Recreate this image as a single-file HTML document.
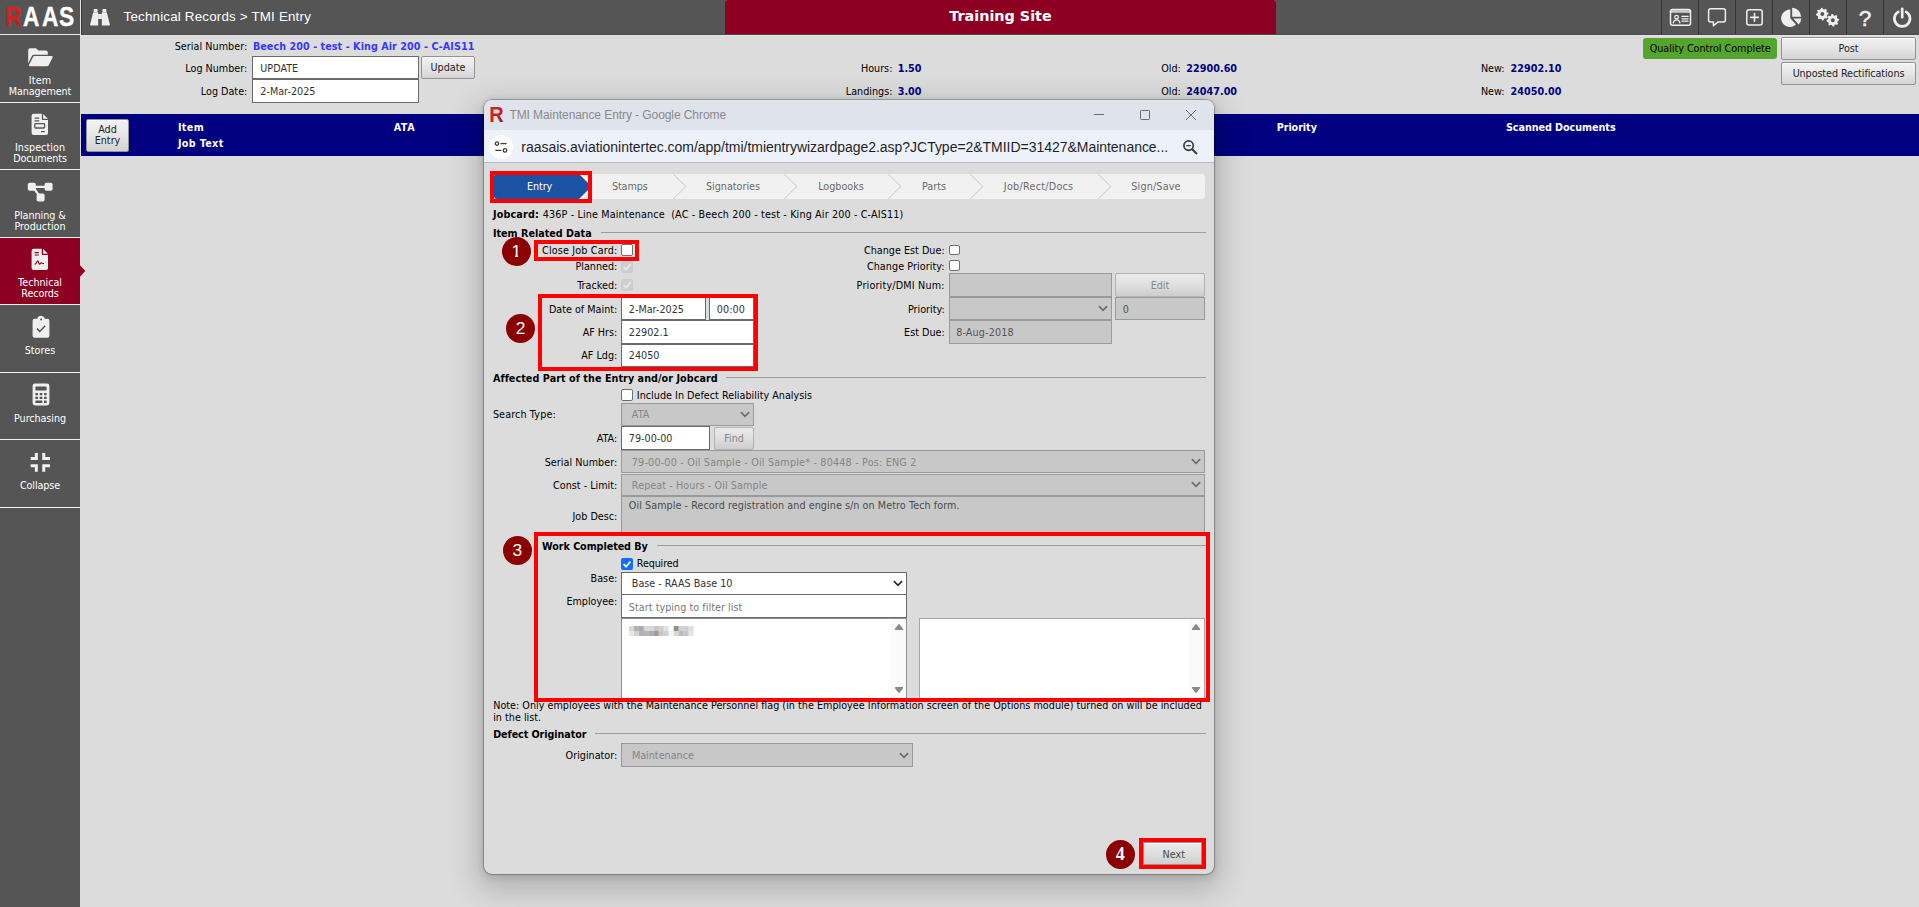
<!DOCTYPE html>
<html lang="en"><head><meta charset="utf-8"><title>TMI Entry</title>
<style>
html,body{margin:0;padding:0}
body{width:1919px;height:907px;overflow:hidden;position:relative;background:#dcdcdc;font-family:'DejaVu Sans','Liberation Sans',sans-serif;font-size:9.65px}
body div,body span.t,body svg{position:absolute;box-sizing:border-box}
span.t{white-space:pre;line-height:1.2}
.inp{background:#fff;border:1px solid #6a6a6a}
.dis{background:#c8c8c8;border:1px solid #9a9a9a}
.btn{background:linear-gradient(#f2f2f2,#e6e6e6 50%,#d3d3d3);border:1px solid #939393;border-radius:2px;box-shadow:inset 0 1px 0 #f9f9f9}
.btnd{background:linear-gradient(#ebebeb,#dfdfdf 50%,#cdcdcd);border:1px solid #b2b2b2;border-radius:2px}
.grp{left:0;top:0;width:0;height:0}
.red{border:4px solid #fe0000}
.circ{border-radius:50%;background:#8b0000}
.cb{background:#fff;border:1px solid #6f6f6f;border-radius:2px}
.cbd{background:#cecece;border:1px solid #cbcbcb;border-radius:2.5px}
.hr{background:#9c9c9c;height:1px}
</style></head>
<body>
<div class="grp" id="topbar">
<div style="left:0px;top:0px;width:1919px;height:35px;background:#555"></div>
<div style="left:81px;top:34px;width:1838px;height:1px;background:#4b4b4b"></div>
<div style="left:81px;top:0px;width:1px;height:35px;background:#3c3c3c"></div>
<div style="left:80px;top:0px;width:1px;height:35px;background:#e2e2e2"></div>
<div style="left:0px;top:34px;width:81px;height:1px;background:#e8e8e8"></div>
<div style="left:80px;top:35px;width:1839px;height:1px;background:#e3e3e3"></div>
<svg style="left:0px;top:0px;" width="80" height="34" viewBox="0 0 80 34"><defs><linearGradient id="rg" x1="0" y1="0" x2="1" y2="1"><stop offset="0" stop-color="#e02424"/><stop offset=".55" stop-color="#d42020"/><stop offset="1" stop-color="#a81414"/></linearGradient></defs><g font-family="'Liberation Sans',sans-serif" font-weight="bold" font-size="27.6" stroke-width=".35"><text x="5.4" y="25.9" fill="url(#rg)" stroke="#d42020" textLength="16" lengthAdjust="spacingAndGlyphs">R</text><text x="23.1" y="25.9" fill="#fff" stroke="#fff" textLength="16.400" lengthAdjust="spacingAndGlyphs">A</text><text x="41.9" y="25.9" fill="#fff" stroke="#fff" textLength="16.400" lengthAdjust="spacingAndGlyphs">A</text><text x="58.9" y="25.9" fill="#fff" stroke="#fff" textLength="15.200" lengthAdjust="spacingAndGlyphs">S</text></g></svg>
<svg style="left:90px;top:8px;" width="21" height="19" viewBox="0 0 21 19"><g fill="#efefef"><rect x="3.6" y="1" width="4" height="3" rx=".8"/><rect x="12.4" y="1" width="4" height="3" rx=".8"/><path d="M3.2 4.2h5v13.3h-7.4c-.5 0-.8-.4-.7-.9z"/><path d="M11.8 4.2h5l3.1 12.4c.1.5-.2.9-.7.9h-7.4z"/><rect x="8.2" y="6" width="3.6" height="5"/></g></svg>
<span class="t" style="left:123.60px;top:9.00px;font-family:'Liberation Sans',sans-serif;font-size:13.4px;color:#fff;letter-spacing:0.171px;">Technical Records &gt; TMI Entry</span>
<div style="left:725px;top:0px;width:551px;height:34px;background:#8e0021;border-radius:4px 4px 0 0"></div>
<span class="t" style="left:949.30px;top:8.00px;font-family:'DejaVu Sans','Liberation Sans',sans-serif;font-size:14.4px;color:#fff;font-weight:bold;letter-spacing:-0.020px;">Training Site</span>
<div style="left:1661px;top:0px;width:1px;height:34px;background:#333"></div>
<div style="left:1698px;top:0px;width:1px;height:34px;background:#333"></div>
<div style="left:1735px;top:0px;width:1px;height:34px;background:#333"></div>
<div style="left:1772px;top:0px;width:1px;height:34px;background:#333"></div>
<div style="left:1809px;top:0px;width:1px;height:34px;background:#333"></div>
<div style="left:1846px;top:0px;width:1px;height:34px;background:#333"></div>
<div style="left:1883px;top:0px;width:1px;height:34px;background:#333"></div>
<svg style="left:1669px;top:8px;" width="23" height="19" viewBox="0 0 23 19"><rect x="1.5" y="1.6" width="20" height="15.6" rx="2" fill="none" stroke="#efefef" stroke-linecap="round" stroke-linejoin="round" stroke-width="1.500"/><path d="M2.200 3.500h18.600" fill="none" stroke="#efefef" stroke-linecap="round" stroke-linejoin="round" stroke-width="2.600" stroke-opacity=".8"/><circle cx="7.6" cy="9.200" r="1.800" fill="none" stroke="#efefef" stroke-linecap="round" stroke-linejoin="round" stroke-width="1.300"/><path d="M4.3 14.8c.3-2.2 1.6-3 3.3-3s3 .8 3.300 3" fill="none" stroke="#efefef" stroke-linecap="round" stroke-linejoin="round" stroke-width="1.300"/><path d="M13 8.400h6M13 10.800h6M13 13.200h6" fill="none" stroke="#efefef" stroke-linecap="round" stroke-linejoin="round" stroke-width="1.300"/></svg>
<svg style="left:1706px;top:7px;" width="22" height="21" viewBox="0 0 22 21"><path d="M4.6 1.700h12.800a2 2 0 0 1 2 2v9.400a2 2 0 0 1-2 2h-5.600l-4.400 3.700v-3.700h-2.800a2 2 0 0 1-2-2v-9.400a2 2 0 0 1 2-2z" fill="none" stroke="#efefef" stroke-linecap="round" stroke-linejoin="round" stroke-width="1.500"/></svg>
<svg style="left:1745px;top:8px;" width="19" height="19" viewBox="0 0 19 19"><rect x="1.8" y="1.700" width="15.400" height="15.400" rx="2.300" fill="none" stroke="#efefef" stroke-linecap="round" stroke-linejoin="round" stroke-width="1.500"/><path d="M9.500 5.600v7.600M5.700 9.400h7.600" fill="none" stroke="#efefef" stroke-linecap="round" stroke-linejoin="round" stroke-width="1.6"/></svg>
<svg style="left:1781px;top:7px;" width="22" height="21" viewBox="0 0 22 21"><path d="M9.300 2.600v8.600l5.600 6.300a8.700 8.700 0 1 1-5.600-14.900z" fill="#efefef"/><path d="M11.200 .8a8.900 8.900 0 0 1 8.900 8.900h-8.900z" fill="#efefef"/><path d="M12.300 11.600h8a8.600 8.600 0 0 1-2.700 5.800z" fill="#efefef"/></svg>
<svg style="left:1815px;top:7px;" width="26" height="21" viewBox="0 0 26 21"><path fill-rule="evenodd" fill="#efefef" d="M6.07,0.92L7.30,0.80L8.26,2.28L9.18,2.56L10.80,1.86L11.75,2.65L11.39,4.37L11.84,5.22L13.48,5.87L13.60,7.10L12.12,8.06L11.84,8.98L12.54,10.60L11.75,11.55L10.03,11.19L9.18,11.64L8.53,13.28L7.30,13.40L6.34,11.92L5.42,11.64L3.80,12.34L2.85,11.55L3.21,9.83L2.76,8.98L1.12,8.33L1.00,7.10L2.48,6.14L2.76,5.22L2.06,3.60L2.85,2.65L4.57,3.01L5.42,2.56zM5.30,7.1a2.0,2.0 0 1,0 4.0,0a2.0,2.0 0 1,0 -4.0,0z"/><path fill-rule="evenodd" fill="#efefef" d="M16.57,7.12L17.80,7.00L18.76,8.48L19.68,8.76L21.30,8.06L22.25,8.85L21.89,10.57L22.34,11.42L23.98,12.07L24.10,13.30L22.62,14.26L22.34,15.18L23.04,16.80L22.25,17.75L20.53,17.39L19.68,17.84L19.03,19.48L17.80,19.60L16.84,18.12L15.92,17.84L14.30,18.54L13.35,17.75L13.71,16.03L13.26,15.18L11.62,14.53L11.50,13.30L12.98,12.34L13.26,11.42L12.56,9.80L13.35,8.85L15.07,9.21L15.92,8.76zM15.80,13.3a2.0,2.0 0 1,0 4.0,0a2.0,2.0 0 1,0 -4.0,0z"/></svg>
<span class="t" style="left:1858.71px;top:5.00px;font-family:'Liberation Sans',sans-serif;font-size:22.6px;color:#efefef;-webkit-text-stroke:.5px #efefef;">?</span>
<svg style="left:1892px;top:7px;" width="21" height="21" viewBox="0 0 21 21"><path d="M6.300 4.900a7.800 7.800 0 1 0 7.800 0" fill="none" stroke="#efefef" stroke-linecap="round" stroke-linejoin="round" stroke-width="2.700"/><path d="M10.200 1.800v8.400" fill="none" stroke="#efefef" stroke-linecap="round" stroke-linejoin="round" stroke-width="2.700"/></svg>
</div>
<div class="grp" id="sidebar">
<div style="left:0px;top:35px;width:80px;height:872px;background:#555"></div>
<div style="left:0px;top:102px;width:80px;height:1px;background:#f0f0f0"></div>
<div style="left:0px;top:169px;width:80px;height:1px;background:#f0f0f0"></div>
<div style="left:0px;top:237px;width:80px;height:1px;background:#f0f0f0"></div>
<div style="left:0px;top:304px;width:80px;height:1px;background:#f0f0f0"></div>
<div style="left:0px;top:372px;width:80px;height:1px;background:#f0f0f0"></div>
<div style="left:0px;top:439px;width:80px;height:1px;background:#f0f0f0"></div>
<div style="left:0px;top:507px;width:80px;height:1px;background:#f0f0f0"></div>
<div style="left:0px;top:238px;width:80px;height:66px;background:#8e0021"></div>
<svg style="left:80px;top:264px;" width="6" height="14" viewBox="0 0 6 14"><path d="M0 1.300L5.300 7 0 12.700z" fill="#8e0021"/></svg>
<span class="t" style="left:28.80px;top:75.00px;font-family:'DejaVu Sans','Liberation Sans',sans-serif;font-size:9.65px;color:#fff;letter-spacing:0.120px;">Item</span>
<span class="t" style="left:8.75px;top:86.00px;font-family:'DejaVu Sans','Liberation Sans',sans-serif;font-size:9.65px;color:#fff;letter-spacing:-0.091px;">Management</span>
<span class="t" style="left:14.90px;top:142.00px;font-family:'DejaVu Sans','Liberation Sans',sans-serif;font-size:9.65px;color:#fff;letter-spacing:0.048px;">Inspection</span>
<span class="t" style="left:13.20px;top:153.00px;font-family:'DejaVu Sans','Liberation Sans',sans-serif;font-size:9.65px;color:#fff;letter-spacing:-0.143px;">Documents</span>
<span class="t" style="left:14.15px;top:210.00px;font-family:'DejaVu Sans','Liberation Sans',sans-serif;font-size:9.65px;color:#fff;letter-spacing:-0.033px;">Planning &amp;</span>
<span class="t" style="left:14.50px;top:221.00px;font-family:'DejaVu Sans','Liberation Sans',sans-serif;font-size:9.65px;color:#fff;letter-spacing:-0.022px;">Production</span>
<span class="t" style="left:18.10px;top:277.00px;font-family:'DejaVu Sans','Liberation Sans',sans-serif;font-size:9.65px;color:#fff;letter-spacing:-0.045px;">Technical</span>
<span class="t" style="left:21.30px;top:288.00px;font-family:'DejaVu Sans','Liberation Sans',sans-serif;font-size:9.65px;color:#fff;letter-spacing:-0.126px;">Records</span>
<span class="t" style="left:24.70px;top:345.00px;font-family:'DejaVu Sans','Liberation Sans',sans-serif;font-size:9.65px;color:#fff;letter-spacing:0.022px;">Stores</span>
<span class="t" style="left:14.05px;top:413.00px;font-family:'DejaVu Sans','Liberation Sans',sans-serif;font-size:9.65px;color:#fff;letter-spacing:-0.077px;">Purchasing</span>
<span class="t" style="left:19.95px;top:480.00px;font-family:'DejaVu Sans','Liberation Sans',sans-serif;font-size:9.65px;color:#fff;letter-spacing:-0.101px;">Collapse</span>
<svg style="left:27px;top:47px;" width="27" height="21" viewBox="0 0 27 21"><path fill="#efefef" d="M1.200 3.300a2 2 0 0 1 2-2h5.800l2.400 2.300h7.400a2 2 0 0 1 2 2v2.100h-13.600a2.600 2.600 0 0 0-2.300 1.400l-3.700 7.300z"/><path fill="#efefef" d="M7.400 8.900h17.200c.9 0 1.400.9 1 1.600l-3.900 7.700a2 2 0 0 1-1.800 1.100h-17.200c-.6 0-1-.6-.7-1.200l3.900-7.900a1.800 1.800 0 0 1 1.500-1.300z"/></svg>
<svg style="left:31.0px;top:112.6px;" width="18" height="23" viewBox="0 0 18 23"><path fill="#efefef" d="M2.600 .7h8.200v5.200a1.200 1.200 0 0 0 1.200 1.200h5v13a2 2 0 0 1-2 2h-12.400a2 2 0 0 1-2-2v-17.400a2 2 0 0 1 2-2z"/><path fill="#efefef" d="M12.100 .9l4.800 4.900h-4.800z"/><path d="M3.600 5.200h4.600M3.600 7.800h4.600M10 18.600h3.800" stroke="#555" fill="none" stroke-width="1.300"/><rect x="3.800" y="10.700" width="9.800" height="4.300" rx=".8" stroke="#555" fill="none" stroke-width="1.300"/></svg>
<svg style="left:27px;top:182px;" width="27" height="21" viewBox="0 0 27 21"><rect fill="#efefef" x=".8" y=".8" width="8" height="8" rx="1.800"/><rect fill="#efefef" x="17.600" y=".8" width="8" height="8" rx="1.800"/><rect fill="#efefef" x="9.600" y="11.600" width="8" height="8" rx="1.800"/><path d="M8 4.800h10M6 5l7.600 10.600" stroke="#efefef" stroke-width="2.200" fill="none"/></svg>
<svg style="left:31.0px;top:247.6px;" width="18" height="23" viewBox="0 0 18 23"><path fill="#efefef" d="M2.600 .7h8.200v5.200a1.200 1.200 0 0 0 1.200 1.200h5v13a2 2 0 0 1-2 2h-12.400a2 2 0 0 1-2-2v-17.400a2 2 0 0 1 2-2z"/><path fill="#efefef" d="M12.100 .9l4.800 4.900h-4.800z"/><path d="M3.600 4.600h4.200M3.600 7h4.200" stroke="#8e0021" fill="none" stroke-width="1.200"/><path d="M3.600 16.400c1.800-.2 2.400-3.600 3.200-3.600s.9 3.400 1.700 3.400.9-1.400 1.500-1.400 1 .9 3 .9" stroke="#8e0021" fill="none" stroke-width="1.200"/></svg>
<svg style="left:31.5px;top:315px;" width="18" height="24" viewBox="0 0 18 24"><path fill="#efefef" d="M2.600 3.800h2.600c.5-1.800 2-3 3.800-3s3.300 1.200 3.800 3h2.600a2 2 0 0 1 2 2v15a2 2 0 0 1-2 2h-12.800a2 2 0 0 1-2-2v-15a2 2 0 0 1 2-2z"/><circle cx="9" cy="4.400" r="1" fill="#555"/><path d="M5 13.600l2.800 2.800 5.400-5.600" stroke="#555" stroke-width="1.500" fill="none"/></svg>
<svg style="left:31.5px;top:383px;" width="18" height="23" viewBox="0 0 18 23"><rect fill="#efefef" x=".6" y=".6" width="16.800" height="21.800" rx="2.400"/><rect x="3.400" y="3.600" width="11.200" height="3.800" rx=".6" fill="#555"/><rect x="3.4" y="10.0" width="2.600" height="2.300" rx=".5" fill="#555"/><rect x="7.7" y="10.0" width="2.600" height="2.300" rx=".5" fill="#555"/><rect x="12.0" y="10.0" width="2.600" height="2.300" rx=".5" fill="#555"/><rect x="3.4" y="13.8" width="2.600" height="2.300" rx=".5" fill="#555"/><rect x="7.7" y="13.8" width="2.600" height="2.300" rx=".5" fill="#555"/><rect x="12.0" y="13.8" width="2.600" height="2.300" rx=".5" fill="#555"/><rect x="12.0" y="17.6" width="2.600" height="2.300" rx=".5" fill="#555"/><rect x="3.400" y="17.600" width="6.900" height="2.300" rx=".5" fill="#555"/></svg>
<svg style="left:30px;top:452px;" width="21" height="21" viewBox="0 0 21 21"><path d="M6.350 .9V6.450H.7M13.750 .9V6.450H20M6.350 19.800V13.650H.7M13.750 19.800V13.650H20" stroke="#efefef" stroke-width="3" fill="none"/></svg>
</div>
<div class="grp" id="main">
<span class="t" style="left:174.70px;top:41.00px;font-family:'DejaVu Sans','Liberation Sans',sans-serif;font-size:9.65px;color:#000;letter-spacing:0.040px;">Serial Number:</span>
<span class="t" style="left:252.90px;top:41.00px;font-family:'DejaVu Sans','Liberation Sans',sans-serif;font-size:9.65px;color:#3737ff;font-weight:bold;letter-spacing:0.052px;">Beech 200 - test - King Air 200 - C-AIS11</span>
<span class="t" style="left:185.30px;top:63.00px;font-family:'DejaVu Sans','Liberation Sans',sans-serif;font-size:9.65px;color:#000;">Log Number:</span>
<span class="t" style="left:200.80px;top:86.00px;font-family:'DejaVu Sans','Liberation Sans',sans-serif;font-size:9.65px;color:#000;">Log Date:</span>
<div class="inp" style="left:252px;top:56px;width:167px;height:23px"></div>
<div class="inp" style="left:252px;top:79px;width:167px;height:24px"></div>
<span class="t" style="left:260.30px;top:63.00px;font-family:'DejaVu Sans','Liberation Sans',sans-serif;font-size:9.65px;color:#333;">UPDATE</span>
<span class="t" style="left:260.30px;top:86.00px;font-family:'DejaVu Sans','Liberation Sans',sans-serif;font-size:9.65px;color:#333;">2-Mar-2025</span>
<div class="btn" style="left:421px;top:56px;width:54px;height:23px"></div>
<span class="t" style="left:430.57px;top:62.00px;font-family:'DejaVu Sans','Liberation Sans',sans-serif;font-size:9.65px;color:#222;">Update</span>
<span class="t" style="left:860.95px;top:63.00px;font-family:'DejaVu Sans','Liberation Sans',sans-serif;font-size:9.65px;color:#000;">Hours:</span>
<span class="t" style="left:897.80px;top:63.00px;font-family:'DejaVu Sans','Liberation Sans',sans-serif;font-size:9.65px;color:#000080;font-weight:bold;letter-spacing:-0.062px;">1.50</span>
<span class="t" style="left:845.80px;top:86.00px;font-family:'DejaVu Sans','Liberation Sans',sans-serif;font-size:9.65px;color:#000;letter-spacing:-0.003px;">Landings:</span>
<span class="t" style="left:897.80px;top:86.00px;font-family:'DejaVu Sans','Liberation Sans',sans-serif;font-size:9.65px;color:#000080;font-weight:bold;letter-spacing:-0.062px;">3.00</span>
<span class="t" style="left:1161.19px;top:63.00px;font-family:'DejaVu Sans','Liberation Sans',sans-serif;font-size:9.65px;color:#000;">Old:</span>
<span class="t" style="left:1186.30px;top:63.00px;font-family:'DejaVu Sans','Liberation Sans',sans-serif;font-size:9.65px;color:#000080;font-weight:bold;letter-spacing:0.032px;">22900.60</span>
<span class="t" style="left:1161.19px;top:86.00px;font-family:'DejaVu Sans','Liberation Sans',sans-serif;font-size:9.65px;color:#000;">Old:</span>
<span class="t" style="left:1186.30px;top:86.00px;font-family:'DejaVu Sans','Liberation Sans',sans-serif;font-size:9.65px;color:#000080;font-weight:bold;letter-spacing:0.032px;">24047.00</span>
<span class="t" style="left:1480.88px;top:63.00px;font-family:'DejaVu Sans','Liberation Sans',sans-serif;font-size:9.65px;color:#000;">New:</span>
<span class="t" style="left:1510.60px;top:63.00px;font-family:'DejaVu Sans','Liberation Sans',sans-serif;font-size:9.65px;color:#000080;font-weight:bold;letter-spacing:0.032px;">22902.10</span>
<span class="t" style="left:1480.88px;top:86.00px;font-family:'DejaVu Sans','Liberation Sans',sans-serif;font-size:9.65px;color:#000;">New:</span>
<span class="t" style="left:1510.60px;top:86.00px;font-family:'DejaVu Sans','Liberation Sans',sans-serif;font-size:9.65px;color:#000080;font-weight:bold;letter-spacing:0.032px;">24050.00</span>
<div style="left:1643px;top:38px;width:134px;height:21px;background:#55a42b;border-radius:3px"></div>
<span class="t" style="left:1649.70px;top:43.00px;font-family:'DejaVu Sans','Liberation Sans',sans-serif;font-size:9.65px;color:#000;letter-spacing:-0.029px;">Quality Control Complete</span>
<div class="btn" style="left:1781px;top:37px;width:135px;height:23px"></div>
<span class="t" style="left:1838.43px;top:43.00px;font-family:'DejaVu Sans','Liberation Sans',sans-serif;font-size:9.65px;color:#222;">Post</span>
<div class="btn" style="left:1781px;top:62px;width:135px;height:23px"></div>
<span class="t" style="left:1792.65px;top:68.00px;font-family:'DejaVu Sans','Liberation Sans',sans-serif;font-size:9.65px;color:#222;letter-spacing:-0.085px;">Unposted Rectifications</span>
<div style="left:81px;top:114px;width:1838px;height:42px;background:#000080"></div>
<div class="btn" style="left:86px;top:119px;width:43px;height:33px"></div>
<span class="t" style="left:98.18px;top:124.00px;font-family:'DejaVu Sans','Liberation Sans',sans-serif;font-size:9.65px;color:#222;">Add</span>
<span class="t" style="left:94.70px;top:135.00px;font-family:'DejaVu Sans','Liberation Sans',sans-serif;font-size:9.65px;color:#222;">Entry</span>
<span class="t" style="left:177.90px;top:122.00px;font-family:'DejaVu Sans','Liberation Sans',sans-serif;font-size:9.65px;color:#fff;font-weight:bold;letter-spacing:0.388px;">Item</span>
<span class="t" style="left:177.90px;top:138.00px;font-family:'DejaVu Sans','Liberation Sans',sans-serif;font-size:9.65px;color:#fff;font-weight:bold;letter-spacing:0.330px;">Job Text</span>
<span class="t" style="left:393.70px;top:122.00px;font-family:'DejaVu Sans','Liberation Sans',sans-serif;font-size:9.65px;color:#fff;font-weight:bold;letter-spacing:0.477px;">ATA</span>
<span class="t" style="left:1276.70px;top:122.00px;font-family:'DejaVu Sans','Liberation Sans',sans-serif;font-size:9.65px;color:#fff;font-weight:bold;letter-spacing:-0.055px;">Priority</span>
<span class="t" style="left:1505.90px;top:122.00px;font-family:'DejaVu Sans','Liberation Sans',sans-serif;font-size:9.65px;color:#fff;font-weight:bold;letter-spacing:-0.048px;">Scanned Documents</span>
</div>
<div class="grp" id="popup">
<div style="left:483.6px;top:99.6px;width:730.8px;height:774.8px;border-radius:8px;background:#dcdcdc;box-shadow:0 0 0 .8px rgba(0,0,0,.2),0 0 1.5px rgba(0,0,0,.5),0 10px 30px 7px rgba(0,0,0,.19),0 2px 8px rgba(0,0,0,.15)"></div>
<div style="left:484px;top:100px;width:730px;height:30px;background:#dfe3eb;border-radius:7.500px 7.500px 0 0"></div>
<div style="left:484px;top:130px;width:730px;height:32px;background:#edf1fa"></div>
<div style="left:484px;top:162px;width:730px;height:1px;background:#b9bcc2"></div>
<svg style="left:488px;top:104px;" width="17" height="20" viewBox="0 0 17 20"><defs><linearGradient id="rg2" x1="0" y1="0" x2="1" y2="1"><stop offset="0" stop-color="#e02424"/><stop offset=".55" stop-color="#cc1f1f"/><stop offset="1" stop-color="#9a1414"/></linearGradient></defs><text x="1.200" y="18" font-family="'Liberation Sans',sans-serif" font-weight="bold" font-size="22.200" fill="url(#rg2)" textLength="14.400" lengthAdjust="spacingAndGlyphs">R</text></svg>
<span class="t" style="left:509.40px;top:108.00px;font-family:'Liberation Sans',sans-serif;font-size:12px;color:#8a8a8a;letter-spacing:-0.076px;">TMI Maintenance Entry - Google Chrome</span>
<svg style="left:1093px;top:109px;" width="12" height="12" viewBox="0 0 12 12"><path d="M.7 5.500h10.400" stroke="#6e6e6e" stroke-width="1" fill="none"/></svg>
<svg style="left:1139px;top:109px;" width="12" height="12" viewBox="0 0 12 12"><rect x="1.500" y="1.500" width="9" height="9" rx=".8" stroke="#6e6e6e" stroke-width="1" fill="none"/></svg>
<svg style="left:1185px;top:109px;" width="12" height="12" viewBox="0 0 12 12"><path d="M1 1l10 10M11 1l-10 10" stroke="#6e6e6e" stroke-width="1" fill="none"/></svg>
<div style="left:489px;top:135px;width:24px;height:24px;background:#fff;border-radius:50%"></div>
<svg style="left:493px;top:139px;" width="16" height="16" viewBox="0 0 16 16"><g stroke="#3c3c3c" stroke-width="1.300" fill="none"><circle cx="4" cy="4.600" r="1.700"/><path d="M7.600 4.600h6"/><circle cx="12" cy="11.400" r="1.700"/><path d="M2.400 11.400h6"/></g></svg>
<span class="t" style="left:521.30px;top:139.00px;font-family:'Liberation Sans',sans-serif;font-size:14px;color:#1f1f1f;letter-spacing:-0.030px;">raasais.aviationintertec.com/app/tmi/tmientrywizardpage2.asp?JCType=2&amp;TMIID=31427&amp;Maintenance...</span>
<svg style="left:1182px;top:139px;" width="17" height="17" viewBox="0 0 17 17"><g stroke="#3c3c3c" fill="none"><circle cx="6.600" cy="6.600" r="4.700" stroke-width="1.700"/><path d="M10.200 10.200l4.800 4.800" stroke-width="2"/><path d="M4.400 6.600h4.400" stroke-width="1.300"/></g></svg>
<div style="left:494px;top:174px;width:711px;height:25px;background:#f1f1f1;border-radius:3px 4px 4px 3px"></div>
<svg style="left:494px;top:174px;" width="100" height="25" viewBox="0 0 100 25"><path d="M3 0h82l12.500 12.500-12.500 12.500h-82a3 3 0 0 1-3-3v-19a3 3 0 0 1 3-3z" fill="#1c52a3"/></svg>
<svg style="left:671.5px;top:174px;" width="16" height="25" viewBox="0 0 16 25"><path d="M1.300 0l12.500 12.500-12.500 12.500" stroke="#c6c6c6" stroke-width="1" fill="none"/></svg>
<svg style="left:783.0px;top:174px;" width="16" height="25" viewBox="0 0 16 25"><path d="M1.300 0l12.500 12.500-12.500 12.500" stroke="#c6c6c6" stroke-width="1" fill="none"/></svg>
<svg style="left:887.2px;top:174px;" width="16" height="25" viewBox="0 0 16 25"><path d="M1.300 0l12.500 12.500-12.500 12.500" stroke="#c6c6c6" stroke-width="1" fill="none"/></svg>
<svg style="left:969.0px;top:174px;" width="16" height="25" viewBox="0 0 16 25"><path d="M1.300 0l12.500 12.500-12.500 12.500" stroke="#c6c6c6" stroke-width="1" fill="none"/></svg>
<svg style="left:1097.0px;top:174px;" width="16" height="25" viewBox="0 0 16 25"><path d="M1.300 0l12.500 12.500-12.500 12.500" stroke="#c6c6c6" stroke-width="1" fill="none"/></svg>
<span class="t" style="left:526.95px;top:181.00px;font-family:'DejaVu Sans','Liberation Sans',sans-serif;font-size:9.65px;color:#fff;letter-spacing:-0.062px;">Entry</span>
<span class="t" style="left:611.95px;top:181.00px;font-family:'DejaVu Sans','Liberation Sans',sans-serif;font-size:9.65px;color:#6b6b6b;letter-spacing:-0.099px;">Stamps</span>
<span class="t" style="left:706.00px;top:181.00px;font-family:'DejaVu Sans','Liberation Sans',sans-serif;font-size:9.65px;color:#6b6b6b;letter-spacing:-0.011px;">Signatories</span>
<span class="t" style="left:818.16px;top:181.00px;font-family:'DejaVu Sans','Liberation Sans',sans-serif;font-size:9.65px;color:#6b6b6b;">Logbooks</span>
<span class="t" style="left:921.99px;top:181.00px;font-family:'DejaVu Sans','Liberation Sans',sans-serif;font-size:9.65px;color:#6b6b6b;">Parts</span>
<span class="t" style="left:1003.85px;top:181.00px;font-family:'DejaVu Sans','Liberation Sans',sans-serif;font-size:9.65px;color:#6b6b6b;letter-spacing:0.256px;">Job/Rect/Docs</span>
<span class="t" style="left:1131.35px;top:181.00px;font-family:'DejaVu Sans','Liberation Sans',sans-serif;font-size:9.65px;color:#6b6b6b;letter-spacing:0.158px;">Sign/Save</span>
<div class="red" style="left:490px;top:171px;width:102px;height:32px"></div>
<span class="t" style="left:492.90px;top:209.00px;font-family:'DejaVu Sans','Liberation Sans',sans-serif;font-size:9.65px;color:#000;font-weight:bold;letter-spacing:0.165px;">Jobcard:</span>
<span class="t" style="left:542.70px;top:209.00px;font-family:'DejaVu Sans','Liberation Sans',sans-serif;font-size:9.65px;color:#000;letter-spacing:0.141px;">436P - Line Maintenance  (AC - Beech 200 - test - King Air 200 - C-AIS11)</span>
<span class="t" style="left:492.90px;top:228.00px;font-family:'DejaVu Sans','Liberation Sans',sans-serif;font-size:9.65px;color:#000;font-weight:bold;letter-spacing:0.001px;">Item Related Data</span>
<div class="hr" style="left:601px;top:232px;width:605px"></div>
<span class="t" style="left:542.10px;top:245.00px;font-family:'DejaVu Sans','Liberation Sans',sans-serif;font-size:9.65px;color:#000;letter-spacing:0.151px;">Close Job Card:</span>
<div class="cb" style="left:621px;top:244px;width:12px;height:12px"></div>
<span class="t" style="left:575.44px;top:261.00px;font-family:'DejaVu Sans','Liberation Sans',sans-serif;font-size:9.65px;color:#000;">Planned:</span>
<div class="cbd" style="left:621px;top:261px;width:12px;height:12px"></div>
<svg style="left:621px;top:261px;" width="12" height="12" viewBox="0 0 12 12"><path d="M2.600 6.100l2.500 2.600 4.400-5.600" stroke="#e8e8e8" stroke-width="1.700" fill="none"/></svg>
<span class="t" style="left:577.17px;top:280.00px;font-family:'DejaVu Sans','Liberation Sans',sans-serif;font-size:9.65px;color:#000;">Tracked:</span>
<div class="cbd" style="left:621px;top:279px;width:12px;height:12px"></div>
<svg style="left:621px;top:279px;" width="12" height="12" viewBox="0 0 12 12"><path d="M2.600 6.100l2.500 2.600 4.400-5.600" stroke="#e8e8e8" stroke-width="1.700" fill="none"/></svg>
<span class="t" style="left:548.90px;top:304.00px;font-family:'DejaVu Sans','Liberation Sans',sans-serif;font-size:9.65px;color:#000;">Date of Maint:</span>
<div class="inp" style="left:621px;top:297px;width:85px;height:23px"></div>
<div class="inp" style="left:709px;top:297px;width:45px;height:23px"></div>
<span class="t" style="left:628.80px;top:304.00px;font-family:'DejaVu Sans','Liberation Sans',sans-serif;font-size:9.65px;color:#333;">2-Mar-2025</span>
<span class="t" style="left:716.80px;top:304.00px;font-family:'DejaVu Sans','Liberation Sans',sans-serif;font-size:9.65px;color:#333;letter-spacing:0.090px;">00:00</span>
<span class="t" style="left:582.66px;top:327.00px;font-family:'DejaVu Sans','Liberation Sans',sans-serif;font-size:9.65px;color:#000;">AF Hrs:</span>
<div class="inp" style="left:621px;top:320px;width:133px;height:24px"></div>
<span class="t" style="left:628.80px;top:327.00px;font-family:'DejaVu Sans','Liberation Sans',sans-serif;font-size:9.65px;color:#333;">22902.1</span>
<span class="t" style="left:581.28px;top:350.00px;font-family:'DejaVu Sans','Liberation Sans',sans-serif;font-size:9.65px;color:#000;">AF Ldg:</span>
<div class="inp" style="left:621px;top:344px;width:133px;height:23px"></div>
<span class="t" style="left:628.80px;top:350.00px;font-family:'DejaVu Sans','Liberation Sans',sans-serif;font-size:9.65px;color:#333;">24050</span>
<span class="t" style="left:863.90px;top:245.00px;font-family:'DejaVu Sans','Liberation Sans',sans-serif;font-size:9.65px;color:#000;letter-spacing:0.019px;">Change Est Due:</span>
<div class="cb" style="left:949.2px;top:244.6px;width:10.5px;height:10.5px"></div>
<span class="t" style="left:866.90px;top:261.00px;font-family:'DejaVu Sans','Liberation Sans',sans-serif;font-size:9.65px;color:#000;letter-spacing:0.068px;">Change Priority:</span>
<div class="cb" style="left:949.2px;top:260.3px;width:10.5px;height:10.5px"></div>
<span class="t" style="left:856.60px;top:280.00px;font-family:'DejaVu Sans','Liberation Sans',sans-serif;font-size:9.65px;color:#000;letter-spacing:0.180px;">Priority/DMI Num:</span>
<div class="dis" style="left:949px;top:273px;width:163px;height:24px"></div>
<div class="btnd" style="left:1115px;top:273px;width:90px;height:24px"></div>
<span class="t" style="left:1150.68px;top:280.00px;font-family:'DejaVu Sans','Liberation Sans',sans-serif;font-size:9.65px;color:#868686;">Edit</span>
<span class="t" style="left:907.89px;top:304.00px;font-family:'DejaVu Sans','Liberation Sans',sans-serif;font-size:9.65px;color:#000;">Priority:</span>
<div class="dis" style="left:949px;top:297px;width:163px;height:23px"></div>
<svg style="left:1097.7px;top:305.1px;" width="10" height="7" viewBox="0 0 10 7"><path d="M.9 1.200l4.100 4.100 4.100-4.100" stroke="#6c6c6c" stroke-width="1.700" fill="none"/></svg>
<div class="dis" style="left:1115px;top:297px;width:90px;height:23px"></div>
<span class="t" style="left:1122.80px;top:304.00px;font-family:'DejaVu Sans','Liberation Sans',sans-serif;font-size:9.65px;color:#555;">0</span>
<span class="t" style="left:904.09px;top:327.00px;font-family:'DejaVu Sans','Liberation Sans',sans-serif;font-size:9.65px;color:#000;">Est Due:</span>
<div class="dis" style="left:949px;top:320px;width:163px;height:24px"></div>
<span class="t" style="left:956.20px;top:327.00px;font-family:'DejaVu Sans','Liberation Sans',sans-serif;font-size:9.65px;color:#555;letter-spacing:0.144px;">8-Aug-2018</span>
<span class="t" style="left:492.90px;top:373.00px;font-family:'DejaVu Sans','Liberation Sans',sans-serif;font-size:9.65px;color:#000;font-weight:bold;letter-spacing:0.053px;">Affected Part of the Entry and/or Jobcard</span>
<div class="hr" style="left:726px;top:377px;width:480px"></div>
<div class="cb" style="left:621px;top:389px;width:12px;height:12px"></div>
<span class="t" style="left:636.80px;top:390.00px;font-family:'DejaVu Sans','Liberation Sans',sans-serif;font-size:9.65px;color:#000;letter-spacing:0.016px;">Include In Defect Reliability Analysis</span>
<span class="t" style="left:492.90px;top:409.00px;font-family:'DejaVu Sans','Liberation Sans',sans-serif;font-size:9.65px;color:#000;letter-spacing:0.118px;">Search Type:</span>
<div class="dis" style="left:621px;top:403px;width:133px;height:23px"></div>
<span class="t" style="left:631.80px;top:409.00px;font-family:'DejaVu Sans','Liberation Sans',sans-serif;font-size:9.65px;color:#858585;">ATA</span>
<svg style="left:740px;top:410.7px;" width="10" height="7" viewBox="0 0 10 7"><path d="M.9 1.200l4.100 4.100 4.100-4.100" stroke="#6c6c6c" stroke-width="1.700" fill="none"/></svg>
<span class="t" style="left:596.67px;top:433.00px;font-family:'DejaVu Sans','Liberation Sans',sans-serif;font-size:9.65px;color:#000;">ATA:</span>
<div class="inp" style="left:621px;top:426px;width:89px;height:24px"></div>
<span class="t" style="left:628.80px;top:433.00px;font-family:'DejaVu Sans','Liberation Sans',sans-serif;font-size:9.65px;color:#333;">79-00-00</span>
<div class="btnd" style="left:714px;top:427px;width:40px;height:23px"></div>
<span class="t" style="left:724.13px;top:433.00px;font-family:'DejaVu Sans','Liberation Sans',sans-serif;font-size:9.65px;color:#868686;">Find</span>
<span class="t" style="left:544.70px;top:457.00px;font-family:'DejaVu Sans','Liberation Sans',sans-serif;font-size:9.65px;color:#000;letter-spacing:0.040px;">Serial Number:</span>
<div class="dis" style="left:621px;top:450px;width:584px;height:23px"></div>
<span class="t" style="left:631.80px;top:457.00px;font-family:'DejaVu Sans','Liberation Sans',sans-serif;font-size:9.65px;color:#858585;letter-spacing:0.187px;">79-00-00 - Oil Sample - Oil Sample* - 80448 - Pos: ENG 2</span>
<svg style="left:1191px;top:458.0px;" width="10" height="7" viewBox="0 0 10 7"><path d="M.9 1.200l4.100 4.100 4.100-4.100" stroke="#6c6c6c" stroke-width="1.700" fill="none"/></svg>
<span class="t" style="left:553.10px;top:480.00px;font-family:'DejaVu Sans','Liberation Sans',sans-serif;font-size:9.65px;color:#000;">Const - Limit:</span>
<div class="dis" style="left:621px;top:474px;width:584px;height:22px"></div>
<span class="t" style="left:631.80px;top:480.00px;font-family:'DejaVu Sans','Liberation Sans',sans-serif;font-size:9.65px;color:#858585;letter-spacing:0.084px;">Repeat - Hours - Oil Sample</span>
<svg style="left:1191px;top:481.0px;" width="10" height="7" viewBox="0 0 10 7"><path d="M.9 1.200l4.100 4.100 4.100-4.100" stroke="#6c6c6c" stroke-width="1.700" fill="none"/></svg>
<span class="t" style="left:572.52px;top:511.00px;font-family:'DejaVu Sans','Liberation Sans',sans-serif;font-size:9.65px;color:#000;">Job Desc:</span>
<div class="dis" style="left:621px;top:496px;width:584px;height:40px"></div>
<span class="t" style="left:628.80px;top:500.00px;font-family:'DejaVu Sans','Liberation Sans',sans-serif;font-size:9.65px;color:#4a4a4a;letter-spacing:0.058px;">Oil Sample - Record registration and engine s/n on Metro Tech form.</span>
<span class="t" style="left:542.10px;top:541.00px;font-family:'DejaVu Sans','Liberation Sans',sans-serif;font-size:9.65px;color:#000;font-weight:bold;letter-spacing:-0.070px;">Work Completed By</span>
<div class="hr" style="left:657px;top:545px;width:549px"></div>
<div style="left:621px;top:558px;width:12px;height:12px;background:#116dff;border-radius:2px"></div>
<svg style="left:621px;top:558px;" width="12" height="12" viewBox="0 0 12 12"><path d="M2.600 6.200l2.500 2.500 4.300-5.200" stroke="#fff" stroke-width="1.700" fill="none"/></svg>
<span class="t" style="left:636.80px;top:558.00px;font-family:'DejaVu Sans','Liberation Sans',sans-serif;font-size:9.65px;color:#000;letter-spacing:-0.143px;">Required</span>
<span class="t" style="left:590.61px;top:573.00px;font-family:'DejaVu Sans','Liberation Sans',sans-serif;font-size:9.65px;color:#000;">Base:</span>
<div class="inp" style="left:621px;top:572px;width:286px;height:23px"></div>
<span class="t" style="left:631.80px;top:578.00px;font-family:'DejaVu Sans','Liberation Sans',sans-serif;font-size:9.65px;color:#333;">Base - RAAS Base 10</span>
<svg style="left:892.6px;top:579.5px;" width="10" height="7" viewBox="0 0 10 7"><path d="M.9 1.200l4.100 4.100 4.100-4.100" stroke="#2a2a2a" stroke-width="1.700" fill="none"/></svg>
<span class="t" style="left:566.38px;top:596.00px;font-family:'DejaVu Sans','Liberation Sans',sans-serif;font-size:9.65px;color:#000;">Employee:</span>
<div class="inp" style="left:621px;top:594px;width:286px;height:24px"></div>
<span class="t" style="left:628.80px;top:602.00px;font-family:'DejaVu Sans','Liberation Sans',sans-serif;font-size:9.65px;color:#777;letter-spacing:0.044px;">Start typing to filter list</span>
<div style="left:621px;top:618px;width:286px;height:82px;background:#fff;border:1px solid #8f8f8f"></div>
<div style="left:891px;top:619px;width:15px;height:80px;background:#fafafa"></div>
<div style="left:919px;top:618px;width:286px;height:82px;background:#fff;border:1px solid #a5a5a5"></div>
<div style="left:1189px;top:619px;width:15px;height:80px;background:#fafafa"></div>
<svg style="left:893.6px;top:623px;" width="10" height="8" viewBox="0 0 10 8"><path d="M5 2l3.300 4.200h-6.600z" fill="#8a8a8a" stroke="#8a8a8a" stroke-width="1.800" stroke-linejoin="round"/></svg>
<svg style="left:893.6px;top:686px;" width="10" height="8" viewBox="0 0 10 8"><path d="M5 6l3.300-4.200h-6.600z" fill="#8a8a8a" stroke="#8a8a8a" stroke-width="1.800" stroke-linejoin="round"/></svg>
<svg style="left:1191.4px;top:623px;" width="10" height="8" viewBox="0 0 10 8"><path d="M5 2l3.300 4.200h-6.600z" fill="#8a8a8a" stroke="#8a8a8a" stroke-width="1.800" stroke-linejoin="round"/></svg>
<svg style="left:1191.4px;top:686px;" width="10" height="8" viewBox="0 0 10 8"><path d="M5 6l3.300-4.200h-6.600z" fill="#8a8a8a" stroke="#8a8a8a" stroke-width="1.800" stroke-linejoin="round"/></svg>
<svg style="left:629.1px;top:626px;" width="65" height="10" viewBox="0 0 65 10"><rect x="0.00" y="0" width="5" height="5" fill="#ddd5d0"/><rect x="0.00" y="5" width="5" height="5" fill="#ebe7e4"/><rect x="4.97" y="0" width="5" height="5" fill="#b3b2ac"/><rect x="4.97" y="5" width="5" height="5" fill="#d0d3cf"/><rect x="9.94" y="0" width="5" height="5" fill="#a3aec3"/><rect x="9.94" y="5" width="5" height="5" fill="#b0b1ba"/><rect x="14.91" y="0" width="5" height="5" fill="#dbd8d3"/><rect x="14.91" y="5" width="5" height="5" fill="#b8b5af"/><rect x="19.88" y="0" width="5" height="5" fill="#d1d5dc"/><rect x="19.88" y="5" width="5" height="5" fill="#a8adbb"/><rect x="24.85" y="0" width="5" height="5" fill="#c9c4c3"/><rect x="24.85" y="5" width="5" height="5" fill="#a19b98"/><rect x="29.82" y="0" width="5" height="5" fill="#d0cfcc"/><rect x="29.82" y="5" width="5" height="5" fill="#cac8c6"/><rect x="34.79" y="0" width="5" height="5" fill="#dfe4e8"/><rect x="34.79" y="5" width="5" height="5" fill="#d1cfcd"/><rect x="39.76" y="0" width="5" height="5" fill="#ffffff"/><rect x="39.76" y="5" width="5" height="5" fill="#f0f8fc"/><rect x="44.73" y="0" width="5" height="5" fill="#978d87"/><rect x="44.73" y="5" width="5" height="5" fill="#dad6d2"/><rect x="49.70" y="0" width="5" height="5" fill="#c9d1d6"/><rect x="49.70" y="5" width="5" height="5" fill="#bbbcbe"/><rect x="54.67" y="0" width="5" height="5" fill="#d2d1d1"/><rect x="54.67" y="5" width="5" height="5" fill="#c3c6ce"/><rect x="59.64" y="0" width="5" height="5" fill="#dce0e4"/><rect x="59.64" y="5" width="5" height="5" fill="#e6e6e6"/></svg>
<div class="red" style="left:534px;top:532px;width:676px;height:170px"></div>
<span class="t" style="left:493.20px;top:700.00px;font-family:'DejaVu Sans','Liberation Sans',sans-serif;font-size:9.65px;color:#000;letter-spacing:0.014px;">Note: Only employees with the Maintenance Personnel flag (in the Employee Information screen of the Options module) turned on will be included</span>
<span class="t" style="left:493.20px;top:712.00px;font-family:'DejaVu Sans','Liberation Sans',sans-serif;font-size:9.65px;color:#000;">in the list.</span>
<span class="t" style="left:493.20px;top:729.00px;font-family:'DejaVu Sans','Liberation Sans',sans-serif;font-size:9.65px;color:#000;font-weight:bold;letter-spacing:-0.084px;">Defect Originator</span>
<div class="hr" style="left:595px;top:733px;width:611px"></div>
<span class="t" style="left:565.61px;top:750.00px;font-family:'DejaVu Sans','Liberation Sans',sans-serif;font-size:9.65px;color:#000;">Originator:</span>
<div class="dis" style="left:621px;top:743px;width:292px;height:24px"></div>
<span class="t" style="left:631.90px;top:750.00px;font-family:'DejaVu Sans','Liberation Sans',sans-serif;font-size:9.65px;color:#858585;">Maintenance</span>
<svg style="left:898.8px;top:751.5px;" width="10" height="7" viewBox="0 0 10 7"><path d="M.9 1.200l4.100 4.100 4.100-4.100" stroke="#6c6c6c" stroke-width="1.700" fill="none"/></svg>
<div class="btn" style="left:1143px;top:842px;width:59px;height:23px;border-radius:0;background:linear-gradient(#ebebeb,#dfdfdf 50%,#cecece)"></div>
<span class="t" style="left:1162.58px;top:849.00px;font-family:'DejaVu Sans','Liberation Sans',sans-serif;font-size:9.65px;color:#484848;">Next</span>
<div class="red" style="left:1139px;top:838px;width:67px;height:31px"></div>
<div class="red" style="left:534px;top:240px;width:105px;height:21px"></div>
<div class="red" style="left:538px;top:294px;width:220px;height:77px"></div>
<div style="left:501.59999999999997px;top:236.5px;width:29.4px;height:29.4px;background:#8b0000;border-radius:50%"></div>
<span class="t" style="left:511.46px;top:241.00px;font-family:'Liberation Sans',sans-serif;font-size:17.4px;color:#fff;">1</span>
<div style="left:511.2px;top:254.8px;width:3.8px;height:3.4px;background:#8b0000"></div>
<div style="left:518.3px;top:254.8px;width:3.6px;height:3.4px;background:#8b0000"></div>
<div style="left:505.8px;top:313.7px;width:29.4px;height:29.4px;background:#8b0000;border-radius:50%"></div>
<span class="t" style="left:515.66px;top:318.00px;font-family:'Liberation Sans',sans-serif;font-size:17.4px;color:#fff;">2</span>
<div style="left:502.59999999999997px;top:535.6999999999999px;width:29.4px;height:29.4px;background:#8b0000;border-radius:50%"></div>
<span class="t" style="left:512.46px;top:540.00px;font-family:'Liberation Sans',sans-serif;font-size:17.4px;color:#fff;">3</span>
<div style="left:1105.6px;top:839.9px;width:29.4px;height:29.4px;background:#8b0000;border-radius:50%"></div>
<span class="t" style="left:1115.80px;top:844.00px;font-family:'Liberation Serif',serif;font-size:18px;color:#fff;font-weight:bold;">4</span>
</div>
</body></html>
